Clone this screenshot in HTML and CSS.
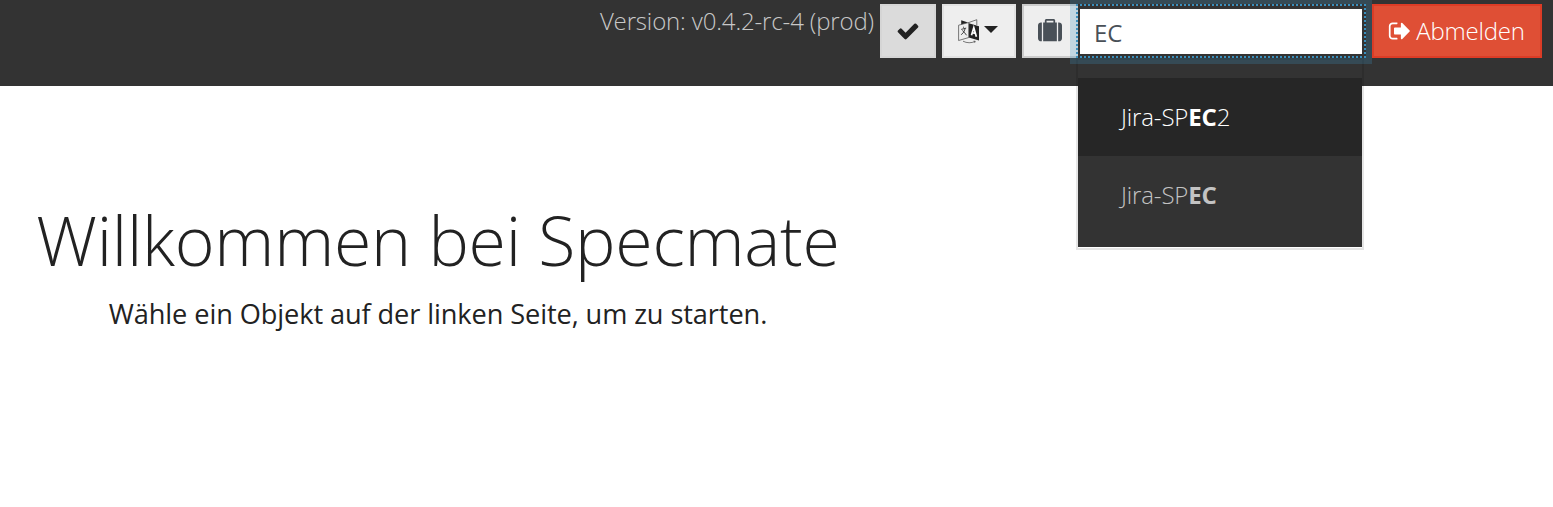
FILE: index.html
```html
<!DOCTYPE html>
<html lang="de">
<head>
<meta charset="utf-8">
<title>Specmate</title>
<link rel="stylesheet" href="styles.css">
</head>
<body>
<header class="navbar">
  <span class="version">Version: v0.4.2-rc-4 (prod)</span>
  <button class="btn btn-check" type="button" aria-label="OK">
    <svg class="icon" viewBox="0 0 1792 1792"><path d="M1671 566q0 40-28 68l-724 724-136 136q-28 28-68 28t-68-28l-136-136-362-362q-28-28-28-68t28-68l136-136q28-28 68-28t68 28l294 295 656-657q28-28 68-28t68 28l136 136q28 28 28 68z"/></svg>
  </button>
  <button class="btn btn-language" type="button" aria-label="Sprache">
    <svg class="icon-language" viewBox="0 0 22 25">
      <path d="M3.2 1.2v4.3L10 3.4zM10.800 4.200l10.200 3v14.300l-10.200-3z"/>
      <path class="thin" d="M.6 6.200l10.200-2.700v15L.6 21.500zM10.800 3.500l8-2.800v5.300M5 22.200c3.800 2 8.500 2 12 .3M15.600 22.100l1.700.2-.7 1.500"/>
      <path class="stroke" d="M3.200 10.400l5-1.300M5 7.800l1.200 1M7.200 9.600q-1 4-4 6.200M4.300 11.500q1.600 1 4.300 4.800"/>
      <path class="letter" d="M13.500 16.300l2.300-7.600 2.600 9M14.300 13.600l3.100.9"/>
    </svg>
    <span class="caret"></span>
  </button>
  <div class="project-group">
    <span class="btn btn-project">
      <svg class="icon" viewBox="0 0 1792 1792"><path d="M640 256h512v-128h-512v128zm-352 0v1408h-64q-92 0-158-66t-66-158v-960q0-92 66-158t158-66h64zm1120 0v1408h-1024v-1408h128v-160q0-40 28-68t68-28h576q40 0 68 28t28 68v160h128zm384 224v960q0 92-66 158t-158 66h-64v-1408h64q92 0 158 66t66 158z"/></svg>
    </span>
    <div class="typeahead">
      <div class="search-ring"><input class="search" type="text" value="EC" aria-label="Projekt"></div>
      <div class="menu">
        <div class="menu-item active">Jira-SP<strong>EC</strong>2</div>
        <div class="menu-item">Jira-SP<strong>EC</strong></div>
      </div>
    </div>
  </div>
  <button class="btn btn-logout" type="button">
    <svg class="icon" viewBox="0 0 1792 1792"><path d="M704 1440q0 4 1 20t.5 26.5-3 23.5-10 19.500-20.500 6.500h-320q-119 0-203.500-84.500t-84.500-203.500v-704q0-119 84.500-203.500t203.500-84.500h320q13 0 22.500 9.500t9.500 22.500q0 4 1 20t.5 26.500-3 23.500-10 19.500-20.500 6.500h-320q-66 0-113 47t-47 113v704q0 66 47 113t113 47h312l11.500 1 11.500 3 8 5.500 7 9 2 13.500zm928-544q0 26-19 45l-544 544q-19 19-45 19t-45-19-19-45v-288h-448q-26 0-45-19t-19-45v-384q0-26 19-45t45-19h448v-288q0-26 19-45t45-19 45 19l544 544q19 19 19 45z"/></svg>
    <span class="logout-label">Abmelden</span>
  </button>
</header>
<main class="welcome">
  <h1 class="title">Willkommen bei Specmate</h1>
  <p class="subtitle">Wähle ein Objekt auf der linken Seite, um zu starten.</p>
</main>
</body>
</html>
```
FILE: styles.css
```css
* { box-sizing: border-box; }

body {
  margin: 0;
  background: #fff;
  color: #222;
  font-family: "Open Sans", sans-serif;
  font-size: 24px;
  font-weight: 300;
  overflow: hidden;
}

.navbar {
  display: flex;
  justify-content: flex-end;
  align-items: flex-start;
  gap: 6px;
  height: 86px;
  padding: 4px 11px 0 0;
  background: #333;
}

.version {
  color: #c8c8c8;
  letter-spacing: -.14px;
  line-height: 34px;
}

.btn {
  display: flex;
  align-items: center;
  justify-content: center;
  height: 54px;
  padding: 0;
  border: 2px solid #e2e2e2;
  border-radius: 0;
  background: #eee;
  color: #222;
  font: inherit;
}

.icon {
  width: 24px;
  height: 24px;
  fill: currentColor;
}

.btn-check {
  width: 56px;
  background: #dbdbdb;
  border-color: #d5d5d5;
}

.btn-language {
  width: 74px;
  gap: 4px;
  padding-right: 2px;
}

.icon-language {
  width: 22px;
  height: 25px;
  margin-top: 1px;
  fill: #222;
}

.icon-language .thin,
.icon-language .stroke,
.icon-language .letter {
  fill: none;
  stroke: #444;
  stroke-width: .7;
}

.icon-language .stroke { stroke-width: 1; }

.icon-language .letter {
  stroke: #fff;
  stroke-width: 1.7;
}

.caret {
  margin-bottom: 4px;
  border: 7px solid transparent;
  border-top-color: #222;
  border-bottom: 0;
}

.project-group { display: flex; }

.btn-project {
  width: 54px;
  padding-right: 1px;
  border-color: #ccc;
  border-right: 0;
  color: #495057;
}

.typeahead {
  position: relative;
  width: 290px;
}

.search-ring {
  position: relative;
  z-index: 2;
  height: 54px;
  padding: 5px 4px 4px;
  box-shadow: 0 0 0 6px rgba(58, 143, 189, .25);
  background:
    repeating-linear-gradient(90deg, #3a8fbd 0 2px, transparent 2px 4px) 0 0 / 100% 2px no-repeat,
    repeating-linear-gradient(90deg, #3a8fbd 0 2px, transparent 2px 4px) 0 100% / 100% 2px no-repeat,
    repeating-linear-gradient(#3a8fbd 0 2px, #bdd0dc 2px 4px) 0 0 / 2px 100% no-repeat,
    repeating-linear-gradient(#3a8fbd 0 2px, transparent 2px 4px) 100% 0 / 2px 100% no-repeat,
    #333;
}

.search {
  display: block;
  width: 282px;
  height: 45px;
  padding: 1px 14px 0;
  border: 0;
  outline: 0;
  background: #fff;
  color: #495057;
  font: 400 24px "Open Sans", sans-serif;
}

.menu {
  position: absolute;
  z-index: 1;
  top: 54px;
  left: 0;
  width: 288px;
  height: 192px;
  padding-bottom: 1px;
  border: 2px solid rgba(0, 0, 0, .1);
  background: linear-gradient(#333, #333) content-box, #fff padding-box;
  background-clip: content-box, padding-box;
}

.menu-item {
  height: 78px;
  padding-left: 43px;
  color: #c3c3c3;
  letter-spacing: -.14px;
  line-height: 78px;
}

.menu-item:first-child { margin-top: 18px; }

.menu-item.active {
  background: #262626;
  color: #fff;
}

.menu-item strong { font-weight: 700; }

.btn-logout {
  width: 170px;
  gap: 4px;
  padding-right: 1px;
  border-color: #dc3c26;
  background: #df4f35;
  color: #fff;
}

.logout-label {
  padding-bottom: 2px;
  letter-spacing: -.2px;
}

.welcome {
  width: 876px;
  padding-top: 102px;
  text-align: center;
}

.title {
  margin: 0;
  font-size: 68px;
  font-weight: 300;
  letter-spacing: -.25px;
  line-height: 104px;
}

.subtitle {
  margin: 0;
  font-size: 27.2px;
  font-weight: 400;
  letter-spacing: -.1px;
  line-height: 44px;
}
```
